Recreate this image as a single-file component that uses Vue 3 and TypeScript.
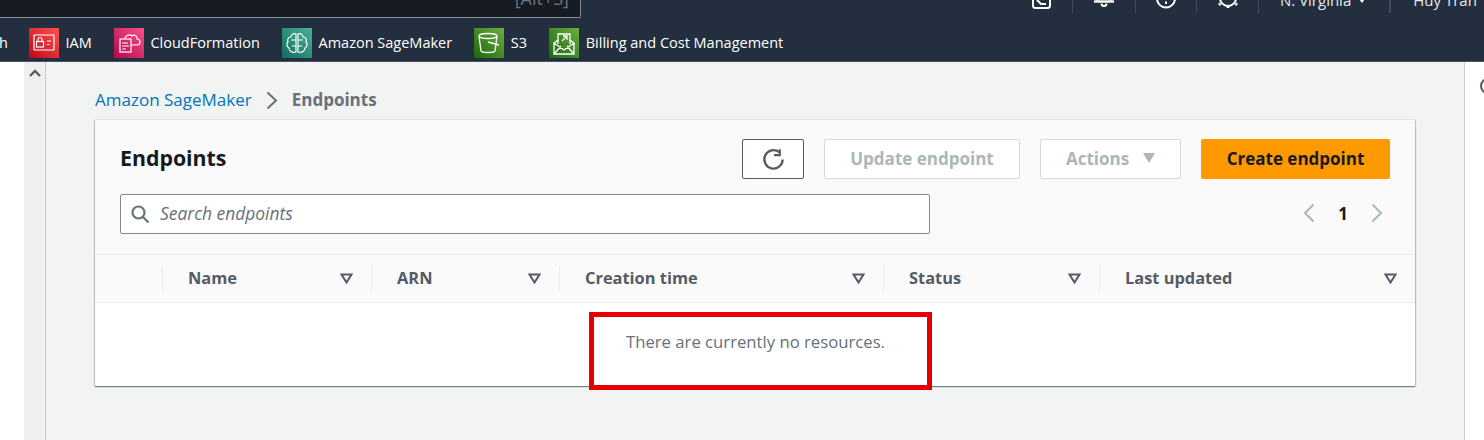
<script setup lang="ts">
interface Col { label: string; width: number }
const cols: Col[] = [
  { label: 'Name', width: 209 },
  { label: 'ARN', width: 188 },
  { label: 'Creation time', width: 324 },
  { label: 'Status', width: 216 },
  { label: 'Last updated', width: 316 },
]
</script>

<template>
  <div class="page">
    <header class="header">
      <div class="top">
        <div class="search-box"><span class="hint">[Alt+S]</span></div>
        <div class="top-right">
          <svg class="ti" width="20" height="20" viewBox="0 0 20 20" fill="none" stroke="#fff" stroke-width="2"><rect x="1" y="1" width="17" height="17" rx="2.500"/><path d="M5 10l4 4h5"/></svg>
          <i class="sep"></i>
          <svg class="ti" width="20" height="20" viewBox="0 0 20 20" fill="none" stroke="#fff" stroke-width="2"><path d="M3 11c1-1 1-3 1-6a6 6 0 0 1 12 0c0 3 0 5 1 6"/><path d="M0 11.500h20" stroke-width="2.400"/><path d="M7.500 13.500a2.500 2.500 0 0 0 5 0" stroke-width="2"/></svg>
          <i class="sep"></i>
          <svg class="ti" width="20" height="20" viewBox="0 0 20 20" fill="none" stroke="#fff" stroke-width="2"><circle cx="10" cy="8.500" r="9"/><path d="M10 4v6M10 11.500v2.500"/></svg>
          <i class="sep"></i>
          <svg class="ti" width="20" height="20" viewBox="0 0 20 20" fill="none" stroke="#fff" stroke-width="2"><circle cx="10" cy="8" r="8"/><path d="M2.500 13.500l-1.500 1.500M17.500 13.500l1.500 1.500M10 16v2" stroke-width="2.600"/></svg>
          <i class="sep"></i>
          <span class="ttext region">N. Virginia <b class="caret"></b></span>
          <i class="sep wide"></i>
          <span class="ttext user">Huy Tran</span>
        </div>
      </div>
      <nav class="shortcuts">
        <span class="cut-h">h</span>
        <a class="sc"><span class="ic red"><svg viewBox="0 0 30 30" fill="none" stroke="#fff" stroke-width="1.200"><rect x="5" y="7" width="20" height="15" rx="0.500"/><rect x="7.500" y="13.500" width="7" height="5.500"/><path d="M9 13.500v-2a2 2 0 0 1 4 0v2M18 13h4M18 16.500h2.500"/></svg></span>IAM</a>
        <a class="sc"><span class="ic pink"><svg viewBox="0 0 30 30" fill="none" stroke="#fff" stroke-width="1.200"><rect x="6" y="11" width="11" height="13"/><path d="M8 15h6M8 18h7M8 21h4M11 11c0-4 5-5 7-3 3-2 5 0 5 3 2 0 3 1 3 3s-1 3-3 3h-6"/></svg></span>CloudFormation</a>
        <a class="sc"><span class="ic teal"><svg viewBox="0 0 30 30" fill="none" stroke="#fff" stroke-width="1.200"><path d="M14 6c-3-1-5 1-5 3-3 0-4 3-3 5-2 2-1 5 1 6 0 3 3 5 7 4zM16 6c3-1 5 1 5 3 3 0 4 3 3 5 2 2 1 5-1 6 0 3-3 5-7 4zM14 12H9M16 12h5M14 18h-4M16 18h4"/></svg></span>Amazon SageMaker</a>
        <a class="sc"><span class="ic green"><svg viewBox="0 0 30 30" fill="none" stroke="#fff" stroke-width="1.300"><ellipse cx="14" cy="8" rx="9" ry="2.500"/><path d="M5 8l2 15c1 2 13 2 14 0l2-15M14 14l11 3"/></svg></span>S3</a>
        <a class="sc"><span class="ic green"><svg viewBox="0 0 30 30" fill="none" stroke="#fff" stroke-width="1.300"><path d="M5 15v11h20V15l-4-3M9 12l-4 3 10 7 10-7M5 26l7-8M25 26l-7-8M9 16V6h12v10M13 13l5-5M14 8h4v4"/></svg></span>Billing and Cost Management</a>
      </nav>
    </header>

    <div class="body">
      <aside class="rail"></aside>
      <div class="scrollcol">
        <svg width="12" height="8" viewBox="0 0 12 8" fill="none" stroke="#545b64" stroke-width="2.400"><path d="M1 7l5-5 5 5"/></svg>
      </div>
      <main class="content">
        <div class="crumbs">
          <a class="link">Amazon SageMaker</a>
          <svg width="12" height="19" viewBox="0 0 12 19" fill="none" stroke="#687078" stroke-width="2"><path d="M1.500 1.500l8.500 8-8.500 8"/></svg>
          <span class="current">Endpoints</span>
        </div>
        <section class="card">
          <div class="card-head">
            <div class="title-row">
              <h2>Endpoints</h2>
              <div class="actions">
                <button class="btn refresh">
                  <svg width="23" height="23" viewBox="0 0 20 20" fill="none" stroke="#545b64" stroke-width="2"><path d="M15 3.600A8 8 0 1 0 18 10"/><path d="M15.500 1v5.200h-5" stroke-width="1.800"/></svg>
                </button>
                <button class="btn disabled update">Update endpoint</button>
                <button class="btn disabled act">Actions <b class="tri"></b></button>
                <button class="btn primary">Create endpoint</button>
              </div>
            </div>
            <div class="filter-row">
              <label class="filter">
                <svg width="18" height="18" viewBox="0 0 18 18" fill="none" stroke="#687078" stroke-width="2.200"><circle cx="7.500" cy="7.500" r="6"/><path d="M12 12l5.500 5.500"/></svg>
                <span class="ph">Search endpoints</span>
              </label>
              <div class="pager">
                <svg width="12" height="20" viewBox="0 0 12 20" fill="none" stroke="#aab7b8" stroke-width="2"><path d="M10.500 1.500L2 10l8.500 8.500"/></svg>
                <span>1</span>
                <svg width="12" height="20" viewBox="0 0 12 20" fill="none" stroke="#aab7b8" stroke-width="2"><path d="M1.500 1.500L10 10l-8.500 8.500"/></svg>
              </div>
            </div>
          </div>
          <div class="thead">
            <div class="sel"></div>
            <div v-for="c in cols" :key="c.label" class="th" :style="{ width: c.width + 'px' }">
              <span class="thl">{{ c.label }}</span>
              <svg width="13" height="11" viewBox="0 0 13 11" fill="none" stroke="#545b64" stroke-width="2"><path d="M1.500 1.500h10L6.500 9.500z"/></svg>
            </div>
          </div>
          <div class="empty">There are currently no resources.</div>
        </section>
        <div class="highlight"></div>
      </main>
      <aside class="right">
        <span class="ring"></span>
      </aside>
    </div>
  </div>
</template>

<style>
html, body { margin: 0; padding: 0; background: #fff; }
</style>

<style scoped>
.page { width: 1484px; height: 440px; overflow: hidden; display: flex; flex-direction: column; font-family: "Open Sans", "Noto Sans", sans-serif; }
.header { height: 62px; background: #232f3e; flex: none; border-bottom: 1px solid #4a5461; box-sizing: border-box; }
.top { height: 18px; display: flex; justify-content: space-between; }
.search-box { width: 581px; height: 18px; box-sizing: border-box; background: #161b24; border: 1px solid #8a8f94; border-width: 0 1px 1px 0; border-bottom-right-radius: 2px; display: flex; justify-content: flex-end; align-items: flex-start; padding-right: 11px; overflow: hidden; }
.hint { color: #6b7480; font-size: 18px; line-height: 18px; margin-top: -11px; white-space: nowrap; }
.top-right { display: flex; align-items: flex-start; height: 14px; overflow: hidden; width: 452px; }
.ti { margin-top: -10px; flex: none; }
.sep { width: 1px; height: 13px; background: #414d5c; flex: none; }
.sep.wide { width: 2px; }
.top-right .ti:nth-child(1) { margin-right: 20px; }
.top-right .ti:nth-child(3) { margin-left: 21px; margin-right: 21px; }
.top-right .ti:nth-child(5) { margin-left: 20px; margin-right: 20px; }
.top-right .ti:nth-child(7) { margin-left: 21px; margin-right: 20px; }
.ttext { color: #e6e9ec; font-size: 15px; line-height: 15px; margin-top: -7px; white-space: nowrap; }
.region { margin-left: 21px; margin-right: 24px; display: inline-flex; align-items: center; gap: 8px; }
.user { margin-left: 22px; }
.caret { border: 3.500px solid transparent; border-top: 4.500px solid #fff; border-bottom: 0; display: block; }
.shortcuts { height: 43px; display: flex; align-items: flex-start; padding-top: 10px; box-sizing: border-box; color: #fff; font-size: 14.500px; }
.cut-h { width: 30px; line-height: 30px; margin-left: -1px; flex: none; }
.sc { display: flex; align-items: center; gap: 6.500px; line-height: 30px; margin-right: 22.200px; white-space: nowrap; }
.ic { width: 30px; height: 30px; display: block; flex: none; }
.ic svg { width: 30px; height: 30px; display: block; }
.red { background: linear-gradient(45deg, #bd0816, #ff5252); }
.pink { background: linear-gradient(45deg, #b0084d, #ff4f8b); }
.teal { background: linear-gradient(45deg, #116d5b, #4ab29a); }
.green { background: linear-gradient(45deg, #1b660f, #6cae3e); }

.body { flex: 1; display: flex; min-height: 0; }
.rail { width: 24px; background: #fff; flex: none; }
.scrollcol { width: 21px; background: #f0f0f0; flex: none; box-sizing: border-box; padding: 7px 0 0 5px; }
.scrollcol svg { display: block; }
.content { position: relative; flex: 1; background: #f2f3f3; border-left: 1px solid #c8ccce; border-right: 1px solid #c8ccce; padding: 27px 0 0 49px; box-sizing: border-box; min-width: 0; }
.crumbs { display: flex; align-items: center; height: 22px; font-size: 17px; line-height: 22px; gap: 14px; margin-bottom: 9px; }
.link { color: #0073bb; }
.current { color: #687078; font-weight: 700; }
.card { width: 1320px; background: #fff; box-shadow: 0 0 1px 0 rgba(0,28,36,.3), 0 1px 1px 0 rgba(0,28,36,.3), 1px 1px 1px 0 rgba(0,28,36,.15), -1px 1px 1px 0 rgba(0,28,36,.15); }
.card-head { height: 135px; background: #fafafa; box-sizing: border-box; padding: 19px 25px 0 25px; border-bottom: 1px solid #eaeded; }
.title-row { display: flex; justify-content: space-between; align-items: center; height: 40px; }
h2 { margin: -3px 0 0; font-size: 21.300px; line-height: 40px; font-weight: 700; color: #16191f; }
.actions { display: flex; }
.btn { height: 40px; box-sizing: border-box; border-radius: 2px; font: 700 17px "Open Sans", "Noto Sans", sans-serif; padding: 0 0 2px; background: #fff; display: flex; align-items: center; justify-content: center; }
.refresh { width: 62px; border: 1px solid #545b64; margin-right: 20px; padding: 0; }
.disabled { border: 1px solid #d5dbdb; color: #aab7b8; }
.update { width: 196px; margin-right: 20px; }
.act { width: 141px; margin-right: 20px; gap: 14px; }
.tri { border: 6.500px solid transparent; border-top: 10px solid #aab7b8; border-bottom: 0; display: block; }
.primary { width: 189px; background: #ff9900; border: 1px solid #ff9900; color: #16191f; }
.filter-row { display: flex; justify-content: space-between; align-items: center; margin-top: 15px; }
.filter { width: 810px; height: 40px; box-sizing: border-box; background: #fff; border: 1px solid #7f8c8d; border-radius: 2px; display: flex; align-items: center; gap: 11px; padding-left: 10px; font-style: italic; font-size: 17.400px; color: #687078; }
.ph { margin-bottom: 2px; }
.pager { display: flex; align-items: center; gap: 23px; color: #16191f; font-weight: 700; font-size: 17px; margin: -2px 7px 0 0; }
.thead { height: 48px; background: #fafafa; border-bottom: 1px solid #eaeded; box-sizing: border-box; display: flex; align-items: center; }
.sel { width: 67px; flex: none; }
.th { box-sizing: border-box; height: 25px; flex: none; border-left: 1px solid #eaeded; display: flex; justify-content: space-between; align-items: center; padding: 0 18px 0 25px; font-size: 16.400px; font-weight: 700; color: #545b64; }
.thl { margin-bottom: 2px; }
.empty { height: 83px; box-sizing: border-box; padding: 28px 0 0 531px; font-size: 16.700px; line-height: 22px; color: #687078; background: #fff; }
.highlight { position: absolute; left: 543px; top: 250px; width: 343px; height: 78px; box-sizing: border-box; border: 5px solid #e60000; }
.right { width: 19px; background: #fff; flex: none; position: relative; overflow: hidden; }
.ring { position: absolute; left: 15px; top: 16px; width: 16px; height: 16px; box-sizing: border-box; border: 2px solid #545b64; border-radius: 50%; }
</style>
